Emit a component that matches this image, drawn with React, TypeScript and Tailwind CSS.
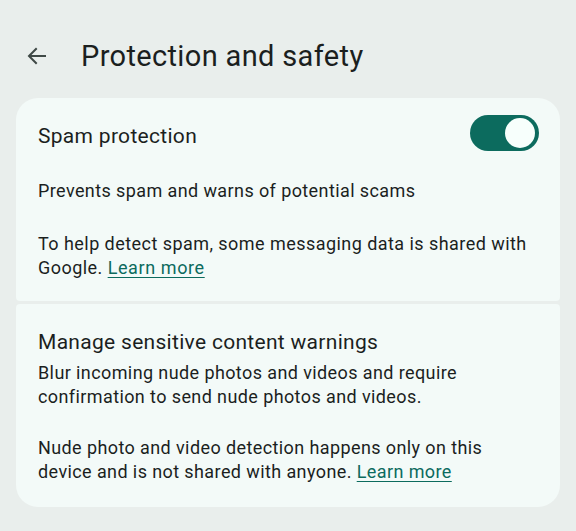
import React from "react";

function BackArrow() {
  return (
    <svg width="24" height="24" viewBox="0 0 24 24" className="text-[#3f4946]">
      <path d="M20 12H5M11 5l-7 7 7 7" fill="none" stroke="currentColor" strokeWidth="2" strokeLinecap="square" />
    </svg>
  );
}

function Toggle() {
  return (
    <div className="w-[69px] h-[36px] rounded-full bg-[#0c6b5e] flex items-center justify-end pr-[4px]">
      <div className="w-[30px] h-[30px] rounded-full bg-[#f7fffc]" />
    </div>
  );
}

export default function App() {
  return (
    <div className="w-[576px] h-[531px] bg-[#e9eeec] text-[#1b1f1e] overflow-hidden" style={{ fontFamily: "Roboto, 'Noto Sans', sans-serif" }}>
      {/* header */}
      <div className="flex items-center h-[98px] pt-[14px] pl-[25px]">
        <BackArrow />
        <h1 className="ml-[32px] text-[29px] leading-[34px] font-normal tracking-[0.35px]">Protection and safety</h1>
      </div>

      <div className="px-[16px] flex flex-col gap-[3px]">
        {/* spam card */}
        <div className="bg-[#f3faf8] rounded-t-[22px] rounded-b-[4px] pl-[22px] pr-[21px] pt-[17px] pb-[21px]">
          <div className="flex items-center justify-between">
            <div className="text-[21px] leading-[28px] tracking-[0.3px] mt-[6px]">Spam protection</div>
            <Toggle />
          </div>
          <p className="mt-[28px] text-[18px] leading-[24px] tracking-[0.4px]">Prevents spam and warns of potential scams</p>
          <p className="mt-[29px] text-[18px] leading-[24px] tracking-[0.45px]">
            <span>To help detect spam, some messaging data is shared with</span> <span>Google.</span>{" "}
            <a className="text-[#0c6b5e] underline underline-offset-[3px] tracking-[0.6px]">Learn more</a>
          </p>
        </div>

        {/* sensitive content card */}
        <div className="bg-[#f3faf8] rounded-t-[4px] rounded-b-[22px] pl-[22px] pr-[21px] pt-[24px] pb-[23px]">
          <div className="text-[21px] leading-[28px] tracking-[0.3px]">Manage sensitive content warnings</div>
          <p className="mt-[5px] text-[18px] leading-[24px] tracking-[0.4px]">
            Blur incoming nude photos and videos and require confirmation to send nude photos and videos.
          </p>
          <p className="mt-[27px] text-[18px] leading-[24px] tracking-[0.4px]">
            <span>Nude photo and video detection happens only on this</span>{" "}
            <span>device and is not shared with anyone.</span>{" "}
            <a className="text-[#0c6b5e] underline underline-offset-[3px]">Learn more</a>
          </p>
        </div>
      </div>
    </div>
  );
}
